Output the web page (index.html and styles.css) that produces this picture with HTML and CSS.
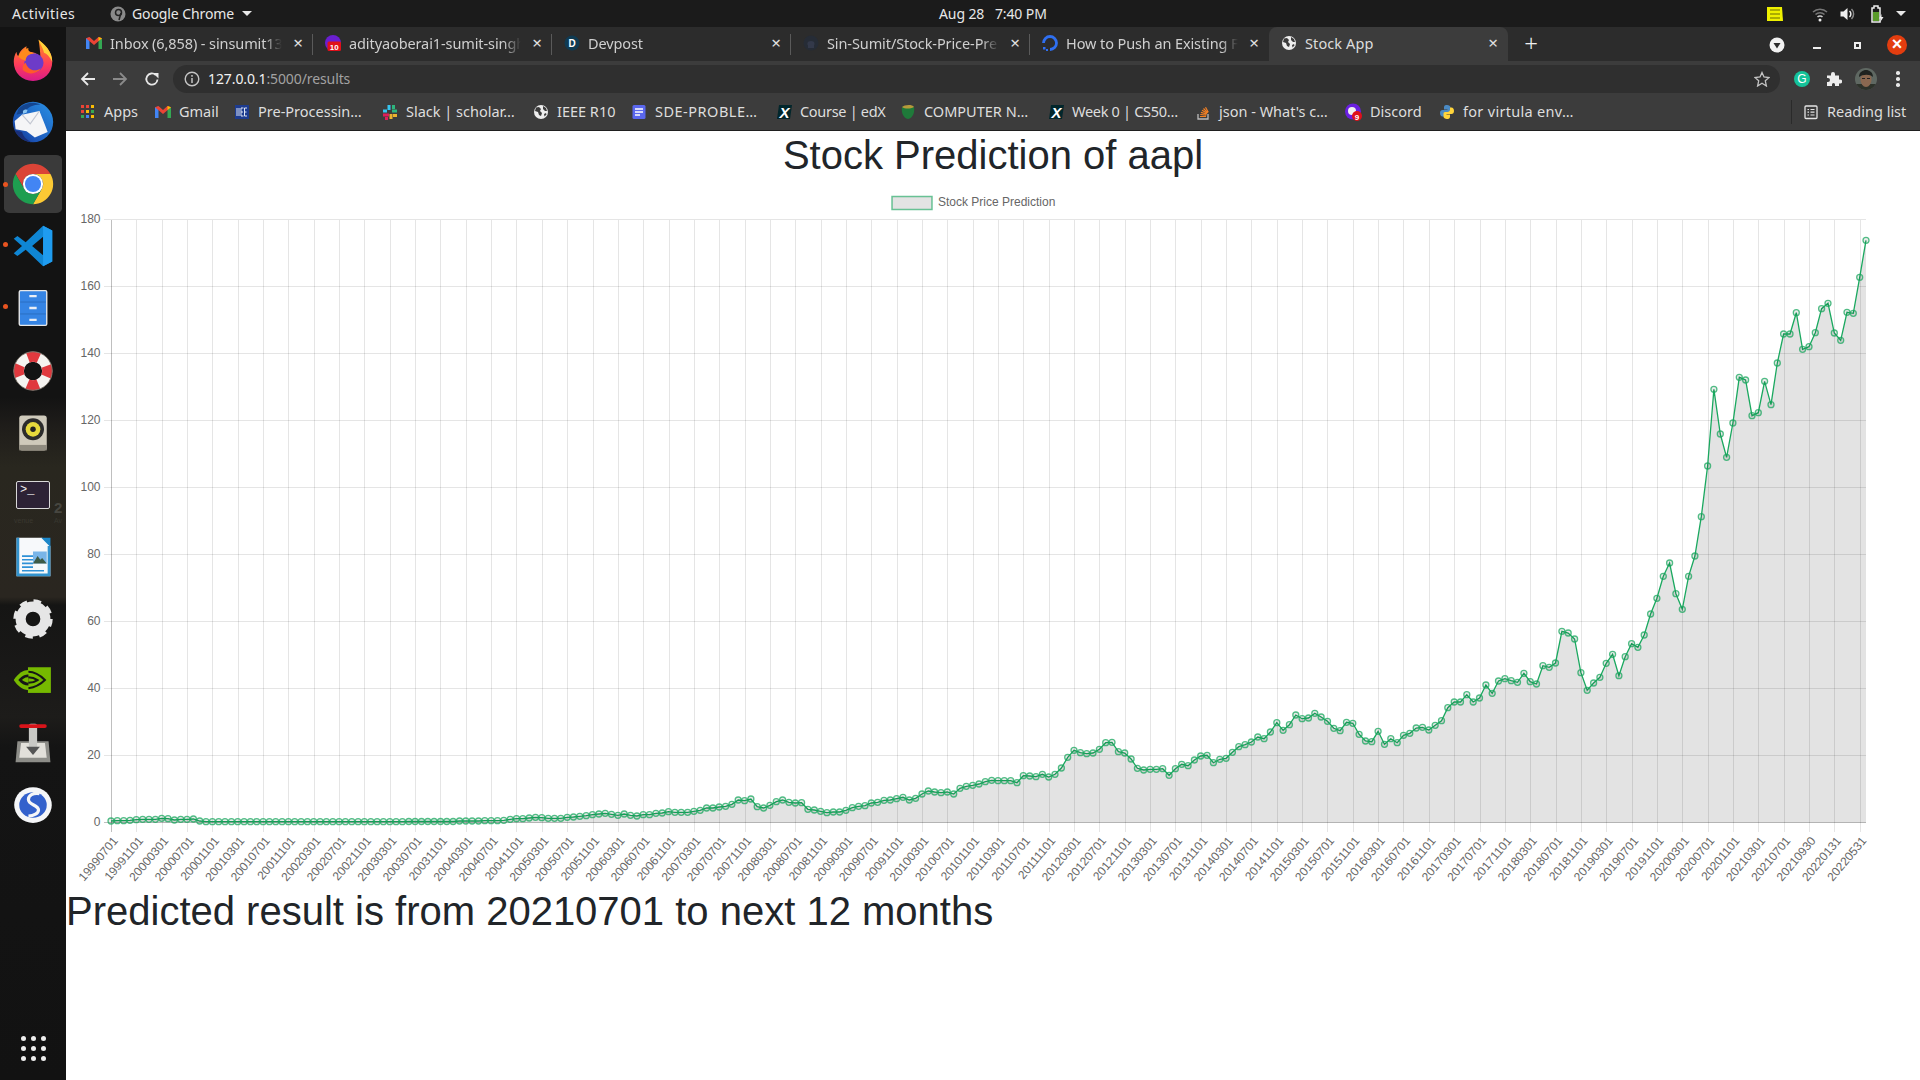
FILE: index.html
```html
<!DOCTYPE html>
<html lang="en">
<head>
<meta charset="utf-8">
<title>Stock App</title>
<link rel="stylesheet" href="styles.css">
</head>
<body>
<svg class="defs" width="0" height="0" aria-hidden="true">
  <symbol id="i-gmail" viewBox="0 0 16 16"><path d="M0 3.200 3.500 2.500V14H0z" fill="#4285f4"/><path d="M16 3.200 12.500 2.500V14H16z" fill="#34a853"/><path d="M0 3.200 3.500 2 8 6l4.500-4 3.500 1.200L8 10z" fill="#ea4335"/><path d="M12.500 2 16 3.200 12.500 6z" fill="#fbbc04"/></symbol>
  <symbol id="i-globe" viewBox="0 0 16 16"><circle cx="8" cy="8" r="7" fill="#eee"/><path d="M3 3.500 6 3l2 2-1 2 2 2-1 3-2-1-1-3-3-1zM10 2l3 2 1 3-2 0-2-2zM11 10l2-1 .5 1.500-2 2z" fill="#3c3c3c"/></symbol>
</svg>

<header class="panel">
  <span class="activities">Activities</span>
  <span class="app-name">
    <svg class="ico16" viewBox="0 0 16 16"><circle cx="8" cy="8" r="7.500" fill="#8a8a8a"/><circle cx="8.500" cy="6.500" r="3" fill="none" stroke="#222" stroke-width="1.500"/><path d="M11 7 9 14" stroke="#222" stroke-width="1.500"/></svg>
    Google Chrome
    <i class="caret"></i>
  </span>
  <span class="clock">Aug 28&nbsp;&nbsp; 7:40 PM</span>
  <span class="tray">
    <svg class="tray-note" viewBox="0 0 16 14"><path d="M0 0h15l1 14H0z" fill="#eef000"/><path d="M3 3h10M3 7h10M3 11h10" stroke="#6a6a00" stroke-width="1.200"/></svg>
    <svg class="tray-wifi" viewBox="0 0 16 16"><path d="M1 6a10 10 0 0 1 14 0M3.500 8.500a6.500 6.500 0 0 1 9 0" fill="none" stroke="#777" stroke-width="1.500"/><path d="M5.500 11a3.500 3.500 0 0 1 5 0" fill="none" stroke="#ccc" stroke-width="1.500"/><circle cx="8" cy="14" r="1.500" fill="#eee"/></svg>
    <svg class="tray-vol" viewBox="0 0 16 16"><path d="M1 5.500h3L8 2v12l-4-3.500H1z" fill="#eee"/><path d="M10 5a4 4 0 0 1 0 6" fill="none" stroke="#eee" stroke-width="1.500"/><path d="M12 3a7 7 0 0 1 0 10" fill="none" stroke="#888" stroke-width="1.500"/></svg>
    <svg class="tray-bat" viewBox="0 0 14 18"><path d="M4 1h4v2h2v14H2V3h2z" fill="none" stroke="#eee" stroke-width="1.500"/><rect x="3" y="7" width="6" height="9" fill="#5a9a2a"/><path d="M11.500 9 9 13.500h2l-1 4 3.500-5.500h-2z" fill="#eee"/></svg>
    <i class="caret"></i>
  </span>
</header>

<div class="desktop">
  <nav class="dock">
    <span class="wall-digit">2</span><span class="wall-av">Av</span><span class="wall-venue">venue</span>
    <div class="dock-item">
      <svg class="dock-ico" viewBox="0 0 48 48">
        <defs><linearGradient id="ff" x1="0" y1="0" x2="0" y2="1"><stop offset="0" stop-color="#ff9a18"/><stop offset=".6" stop-color="#ff3d5a"/><stop offset="1" stop-color="#d81b8a"/></linearGradient></defs>
        <path d="M30 2c6 5 15 12 15 24 0 12-9 21-21 21S3 38 3 26c0-4 1-8 3-11 0 2 1 4 2 5 1-5 5-9 9-11-1 3 0 5 2 6 5 0 10 2 13 6 0-6-1-13-2-20z" fill="url(#ff)"/>
        <path d="M30 2c6 5 15 12 15 24-3-6-6-9-9-10-1-5-4-9-6-14z" fill="#ffd13a"/>
        <circle cx="25" cy="27" r="10.500" fill="#6d3bc8"/>
        <path d="M8 20c2-5 6-8 11-9-1 4 3 5 7 6-8 0-10 4-10 8-3-1-6-2-8-5z" fill="#ff8a1a"/>
        <path d="M16 27c2 7 9 11 17 6-4 6-14 8-20 2-1-3 0-6 3-8z" fill="#ff5a2a"/>
      </svg>
    </div>
    <div class="dock-item">
      <svg class="dock-ico" viewBox="0 0 48 48">
        <defs><linearGradient id="tb" x1="1" y1="0" x2="0" y2="1"><stop offset="0" stop-color="#2a93e6"/><stop offset=".7" stop-color="#1b55b8"/><stop offset="1" stop-color="#16307e"/></linearGradient></defs>
        <circle cx="24" cy="24" r="22" fill="url(#tb)"/>
        <path d="M8 10c6-7 16-9 24-5-8 0-14 3-18 9l-8 2z" fill="#14458f"/>
        <path d="M13 12c2-2 4-2 5-1l-1 3-4 1z" fill="#8cc6f2"/>
        <path d="M4 23 12 16l19-4 6 15 3 8-14 6-9-7-12-2z" fill="#f5f5f7"/>
        <path d="M12 16 21 26 31 12" fill="none" stroke="#c3c7d2" stroke-width="1.300"/>
        <path d="M4 33c3 7 9 12 18 13-6-3-9-7-10-11z" fill="#1a2f78"/>
      </svg>
    </div>
    <div class="dock-item is-active">
      <svg class="dock-ico" viewBox="0 0 48 48">
        <path d="M4.950 13A22 22 0 0 1 43.050 13H24A11 11 0 0 0 14.470 29.500Z" fill="#db4437"/>
        <path d="M43.050 13A22 22 0 0 1 24 46L33.530 29.500A11 11 0 0 0 24 13Z" fill="#fcc934"/>
        <path d="M24 46A22 22 0 0 1 4.950 13L14.470 29.500A11 11 0 0 0 33.530 29.500Z" fill="#1e9e50"/>
        <circle cx="24" cy="24" r="11" fill="#fff"/><circle cx="24" cy="24" r="8.800" fill="#4285f4"/>
      </svg>
    </div>
    <div class="dock-item has-dot">
      <svg class="dock-ico" viewBox="0 0 48 48"><path fill-rule="evenodd" d="M35 2 45 7v34l-10 5L16 28 7 35l-4-3 9-8-9-8 4-3 9 7ZM35 14 23 24l12 10Z" fill="#0f86d4"/><path d="M35 2 45 7v34l-10 5Z" fill="#1f9cf0"/></svg>
    </div>
    <div class="dock-item has-dot">
      <svg class="dock-ico" viewBox="0 0 48 48"><rect x="9" y="5" width="30" height="38" rx="1.500" fill="#3584e4" stroke="#e8e8e8" stroke-width="1.500"/><path d="M10 17.500h28M10 30.500h28" stroke="#2a6cc0" stroke-width="1"/><path d="M20 11h8M20 24h8M20 37h8" stroke="#e8edf5" stroke-width="2.500"/></svg>
    </div>
    <div class="dock-item">
      <svg class="dock-ico" viewBox="0 0 48 48"><circle cx="24" cy="24" r="15.500" fill="none" stroke="#f5f3f0" stroke-width="11"/><circle cx="24" cy="24" r="15.500" fill="none" stroke="#e0393e" stroke-width="11" stroke-dasharray="12.170 12.170" stroke-dashoffset="6.080"/><circle cx="24" cy="24" r="21" fill="none" stroke="#7a7268" stroke-width="1"/></svg>
    </div>
    <div class="dock-item">
      <svg class="dock-ico" viewBox="0 0 48 48"><rect x="9" y="5" width="30" height="38" rx="3" fill="#cfcabb"/><rect x="9" y="37" width="30" height="6" fill="#8f8b7f"/><circle cx="24" cy="20" r="12" fill="#2c2c2c"/><circle cx="24" cy="20" r="8" fill="#e6d93c"/><circle cx="24" cy="20" r="3" fill="#222"/></svg>
    </div>
    <div class="dock-item">
      <div class="term-ico">&gt;_</div>
    </div>
    <div class="dock-item">
      <svg class="dock-ico" viewBox="0 0 48 48"><path d="M6 3h28l9 9v33H6z" fill="#f7f9fb"/><path d="M33 3h10v10z" fill="#1c87c9"/><path d="M6 3h3v39h31V12h3v33H6z" fill="#1c87c9" opacity=".9"/><path d="M12 23h12M12 27h12M12 31h12M12 35h12M12 39h24" stroke="#2f91d6" stroke-width="1.800"/><rect x="24" y="18" width="15" height="13" fill="#79b5e8"/><path d="M24 31l5-8 3 4 2-2 5 6z" fill="#3d5a46"/></svg>
    </div>
    <div class="dock-item">
      <svg class="dock-ico" viewBox="0 0 48 48"><circle cx="24" cy="24" r="13.500" fill="none" stroke="#e6e6e6" stroke-width="11"/><circle cx="24" cy="24" r="19" fill="none" stroke="#e6e6e6" stroke-width="5" stroke-dasharray="8 6.920"/></svg>
    </div>
    <div class="dock-item">
      <svg class="dock-ico" viewBox="0 0 48 48"><rect x="18.500" y="9" width="25" height="28" fill="#76b900"/><path d="M3 23C8 15 14 12 19 12V34C12 34 7 29 3 23Z" fill="#76b900"/><path d="M8 23c4-5 8-6 11-6v12c-4 0-8-2-11-6Z" fill="#161616"/><path d="M12 23c3-3 5-3 7-3v6c-2 0-4-1-7-3Z" fill="#76b900"/><path d="M19 14c7 0 13 4 18 9-5 5-11 8-18 9M19 20c4 0 7 1 10 3-3 2-6 3-10 3" fill="none" stroke="#161616" stroke-width="2.200"/></svg>
    </div>
    <div class="dock-item">
      <svg class="dock-ico" viewBox="0 0 48 48"><path d="M7 22h34l2 23H5z" fill="#8d8d88"/><path d="M11 24h26l2 16H9z" fill="#e2e0da"/><rect x="19.500" y="3" width="9" height="28" rx="2" fill="#c9c9c5"/><path d="M16.500 28h15L24 37z" fill="#555"/><rect x="9" y="3.500" width="30" height="4" rx="2" fill="#d8141a"/></svg>
    </div>
    <div class="dock-item">
      <svg class="dock-ico" viewBox="0 0 48 48"><ellipse cx="24" cy="24" rx="20.500" ry="19.500" fill="#f5f6f8"/><ellipse cx="24" cy="24" rx="15" ry="14" fill="#3361cc"/><path d="M31 11.500c-7-1-12 2-12 6.500 0 6 11 6 11 11.500 0 3.500-5 6.500-11 6.500" fill="none" stroke="#f5f6f8" stroke-width="3.500"/></svg>
    </div>
    <div class="dock-apps"><i></i><i></i><i></i><i></i><i></i><i></i><i></i><i></i><i></i></div>
  </nav>

  <div class="browser">
    <div class="tabstrip">
      <div class="tab">
        <svg class="ico16"><use href="#i-gmail"/></svg>
        <span class="tab-title">Inbox (6,858) - sinsumit13</span>
        <span class="tab-close">×</span>
      </div>
      <div class="tab">
        <svg class="ico16" viewBox="0 0 16 16"><circle cx="8" cy="8" r="8" fill="#6a1fd0"/><rect x="2.500" y="6.500" width="13.500" height="9.500" rx="1.500" fill="#e0101a"/><text x="9.200" y="14.500" text-anchor="middle" class="badge-num">10</text></svg>
        <span class="tab-title">adityaoberai1-sumit-singh</span>
        <span class="tab-close">×</span>
      </div>
      <div class="tab">
        <svg class="ico16" viewBox="0 0 16 16"><circle cx="8" cy="8" r="7.500" fill="#0f3a52"/><text x="8" y="12" text-anchor="middle" class="dev-d">D</text></svg>
        <span class="tab-title">Devpost</span>
        <span class="tab-close">×</span>
      </div>
      <div class="tab">
        <svg class="ico16" viewBox="0 0 16 16"><circle cx="8" cy="8" r="7.500" fill="#262c36"/><path d="M5 13V10.500C4 9 4 6 8 6s4 3 3 4.500V13" fill="#33394a"/></svg>
        <span class="tab-title">Sin-Sumit/Stock-Price-Pre</span>
        <span class="tab-close">×</span>
      </div>
      <div class="tab">
        <svg class="ico16" viewBox="0 0 16 16"><path d="M8 14.500A6.500 6.500 0 1 0 1.500 8" fill="none" stroke="#2f6ff0" stroke-width="2.800"/><path d="M1 12h2.500v2.500H1zM4 14h2v2H4z" fill="#2f6ff0"/></svg>
        <span class="tab-title">How to Push an Existing F</span>
        <span class="tab-close">×</span>
      </div>
      <div class="tab is-current">
        <svg class="ico16"><use href="#i-globe"/></svg>
        <span class="tab-title">Stock App</span>
        <span class="tab-close">×</span>
      </div>
      <span class="new-tab">+</span>
      <div class="winctl">
        <span class="winslot"><svg class="ico16" viewBox="0 0 16 16"><circle cx="8" cy="8" r="7.500" fill="#f2f2f2"/><path d="M4.500 6h7L8 11.500z" fill="#2b2b2b"/></svg></span>
        <span class="winslot"><i class="win-min"></i></span>
        <span class="winslot"><i class="win-max"></i></span>
        <span class="winslot"><span class="win-close">×</span></span>
      </div>
    </div>

    <div class="toolbar">
      <span class="navslot"><svg class="ico16" viewBox="0 0 16 16"><path d="M15 8H2M8 2 2 8l6 6" fill="none" stroke="#e8e8e8" stroke-width="1.800"/></svg></span>
      <span class="navslot"><svg class="ico16" viewBox="0 0 16 16"><path d="M1 8h13M8 2l6 6-6 6" fill="none" stroke="#8a8a8a" stroke-width="1.800"/></svg></span>
      <span class="navslot"><svg class="ico16" viewBox="0 0 16 16"><path d="M13.500 8.500A5.600 5.600 0 1 1 11.800 4" fill="none" stroke="#e8e8e8" stroke-width="1.800"/><path d="M9 1l5.500 0v5.500z" fill="#e8e8e8" transform="translate(0 1)"/></svg></span>
      <div class="urlbar">
        <svg class="ico14" viewBox="0 0 16 16"><circle cx="8" cy="8" r="6.800" fill="none" stroke="#c4c4c4" stroke-width="1.400"/><path d="M8 7v5M8 4v1.800" stroke="#c4c4c4" stroke-width="1.500"/></svg>
        <span class="url"><b>127.0.0.1</b>:5000/results</span>
        <svg class="star" viewBox="0 0 16 16"><path d="M8 1.500 10 6l5 .5-3.700 3.300L12.400 15 8 12.300 3.600 15l1.100-5.200L1 6.500 6 6z" fill="none" stroke="#c4c4c4" stroke-width="1.300"/></svg>
      </div>
      <div class="extensions">
        <span class="navslot"><svg class="ico16 ext-g" viewBox="0 0 16 16"><circle cx="8" cy="8" r="8" fill="#15c39a"/><text x="8" y="12" text-anchor="middle" class="g-letter">G</text></svg></span>
        <span class="navslot"><svg class="ico16" viewBox="0 0 16 16"><path d="M1 4.500h4V3a2 2 0 0 1 4 0v1.500h4v4h1.200a2 2 0 0 1 0 4H13V15H9v-1.500a1.500 1.500 0 0 0-3 0V15H1v-4h1a2 2 0 0 0 0-4H1z" fill="#eee"/></svg></span>
        <span class="navslot"><svg class="avatar" viewBox="0 0 22 22"><defs><clipPath id="av"><circle cx="11" cy="11" r="11"/></clipPath></defs><g clip-path="url(#av)"><rect width="22" height="22" fill="#5f6862"/><rect x="0" y="16" width="22" height="6" fill="#2d322a"/><ellipse cx="11" cy="11.500" rx="5.500" ry="7.500" fill="#8a6850"/><path d="M4 9c0-5 4-7 7-7s7 2 7 7c-3-3-10-3-14 0z" fill="#1f2320"/><path d="M7 10.500h3M12 10.500h3" stroke="#222" stroke-width="1"/></g></svg></span>
        <span class="navslot"><i class="kebab"></i></span>
      </div>
    </div>

    <div class="bookmarks">
      <a class="bm"><svg class="ico16" viewBox="0 0 16 16"><path d="M1 1h3v3H1z" fill="#ea4335"/><path d="M6 1h3v3H6z" fill="#ea4335"/><path d="M11 1h3v3h-3z" fill="#fbbc04"/><path d="M1 6h3v3H1z" fill="#ea4335"/><path d="M6 6h3v3H6z" fill="#fbbc04"/><path d="M11 6h3v3h-3z" fill="#34a853"/><path d="M1 11h3v3H1z" fill="#34a853"/><path d="M6 11h3v3H6z" fill="#4285f4"/><path d="M11 11h3v3h-3z" fill="#fbbc04"/></svg><span>Apps</span></a>
      <a class="bm"><svg class="ico16"><use href="#i-gmail"/></svg><span>Gmail</span></a>
      <a class="bm"><svg class="ico16" viewBox="0 0 16 16"><rect x="1" y="1" width="14" height="14" fill="#1d3b8f"/><path d="M3 4v8M5 4v8M7 4v8h2.500M7 8h2M7 4h2.500M10.500 4v8H13M10.500 8H12.500M10.500 4H13" fill="none" stroke="#dfe6f5" stroke-width="1"/></svg><span>Pre-Processin…</span></a>
      <a class="bm"><svg class="ico16" viewBox="0 0 16 16"><path d="M5.500 1h3v5h-3zM1 5.500h4v3H1z" fill="#36c5f0"/><path d="M10 5.500h5v3h-5zM10 1h3v4h-3z" fill="#2eb67d"/><path d="M7.500 10h3v5h-3zM11 10h4v3h-4z" fill="#ecb22e"/><path d="M1 9.500h6v3H1zM3 13h3v3H3z" fill="#e01e5a"/></svg><span>Slack | scholar…</span></a>
      <a class="bm"><svg class="ico16"><use href="#i-globe"/></svg><span>IEEE R10</span></a>
      <a class="bm"><svg class="ico16" viewBox="0 0 16 16"><rect x="1.500" y="1" width="13" height="14" rx="1.500" fill="#5a67ee"/><path d="M4 5h8M4 8h8M4 11h5" stroke="#fff" stroke-width="1.400"/></svg><span class="wide">SDE-PROBLE…</span></a>
      <a class="bm"><svg class="ico16" viewBox="0 0 16 16"><path d="M3 1h13l-2 14H1z" fill="#02262b"/><text x="8.500" y="13.500" text-anchor="middle" class="edx-x">X</text></svg><span class="tight">Course | edX</span></a>
      <a class="bm"><svg class="ico16" viewBox="0 0 16 16"><path d="M2 3c3 1 8 1 12 0 1 5-1 11-6 12C3 14 1 8 2 3z" fill="#1f7a3a"/><path d="M2 3c2-2 10-3 12 0-4 2-9 2-12 0z" fill="#b59a3a"/></svg><span>COMPUTER N…</span></a>
      <a class="bm"><svg class="ico16" viewBox="0 0 16 16"><path d="M3 1h13l-2 14H1z" fill="#02262b"/><text x="8.500" y="13.500" text-anchor="middle" class="edx-x">X</text></svg><span class="tight">Week 0 | CS50…</span></a>
      <a class="bm"><svg class="ico16" viewBox="0 0 16 16"><path d="M3 10v5h10v-5" fill="none" stroke="#bcbbbb" stroke-width="1.300"/><path d="M5 12.500h6M5.300 10.500l6 .6M5.900 8.400l5.800 1.600M7 6.300l5.200 3M8.500 4.500l4.300 4.300M10.500 3.200l2.800 5" stroke="#f48024" stroke-width="1.200"/></svg><span>json - What's c…</span></a>
      <a class="bm"><svg class="ico16 ico-discord" viewBox="0 0 18 18"><circle cx="9" cy="8.500" r="8" fill="#6a1fe0"/><circle cx="8" cy="8" r="4" fill="#f0f0f0"/><circle cx="13" cy="13" r="5" fill="#e0101a"/><text x="13" y="16.500" text-anchor="middle" class="badge-num">9</text></svg><span>Discord</span></a>
      <a class="bm"><svg class="ico16" viewBox="0 0 16 16"><path d="M8 1C5 1 5 2.500 5 4v1.500h3.500V6H3.500C2 6 1 7 1 9s1 3.500 2.500 3.500H5V10.500C5 9 6 8 7.500 8H10c1 0 1.500-.8 1.500-1.800V3.500C11.500 2 10 1 8 1z" fill="#4a8ac4"/><path d="M8 15c3 0 3-1.500 3-3v-1.500H7.500V10h5c1.500 0 2.500-1 2.500-3s-1-3.500-2.500-3.500H11V5.500C11 7 10 8 8.500 8H6c-1 0-1.500.8-1.500 1.800v2.700C4.500 14 6 15 8 15z" fill="#ffd43b"/></svg><span class="loose">for virtula env…</span></a>
      <div class="reading"><svg class="ico16" viewBox="0 0 16 16"><rect x="2" y="2" width="12" height="12.500" rx="1" fill="none" stroke="#e4e4e4" stroke-width="1.300"/><path d="M4.500 5.500h1.500M7.500 5.500h4M4.500 8.200h1.500M7.500 8.200h4M4.500 11h1.500M7.500 11h4" stroke="#e4e4e4" stroke-width="1.200"/></svg><span>Reading list</span></div>
    </div>

    <main class="page">
      <h1 class="title">Stock Prediction of aapl</h1>
      <div class="chart-wrap"><svg id="chart" class="chart" viewBox="66 187 1854 699" xmlns="http://www.w3.org/2000/svg"></svg></div>
      <h1 class="predicted">Predicted result is from 20210701 to next 12 months</h1>
    </main>
  </div>
</div>
<script src="chart.js"></script>
</body>
</html>
```

FILE: styles.css
```css
* { box-sizing: border-box; }
html, body { margin: 0; height: 1080px; overflow: hidden; }
body { font-family: "Noto Sans", "Open Sans", sans-serif; font-size: 14.500px; background: #fff; }
.defs { position: absolute; }
.ico16 { width: 16px; height: 16px; flex: none; display: block; }
.ico14 { width: 16px; height: 16px; flex: none; display: block; }

/* top panel */
.panel { height: 27px; background: #1b1b1b; color: #e8e8e8; display: flex; align-items: center; position: relative; font-size: 14px; }
.activities { margin-left: 12px; width: 86px; letter-spacing: .5px; }
.app-name { display: flex; align-items: center; gap: 6px; margin-left: 12px; letter-spacing: -.1px; }
.caret { display: inline-block; width: 0; height: 0; border-left: 5px solid transparent; border-right: 5px solid transparent; border-top: 5px solid #e8e8e8; margin-left: 2px; }
.clock { position: absolute; left: 939px; top: 3px; line-height: 21px; letter-spacing: -.1px; }
.tray { margin-left: auto; display: flex; align-items: center; padding-right: 14px; }
.tray-note { width: 16px; height: 14px; margin-right: 29px; }
.tray-wifi { width: 16px; height: 16px; margin-right: 11px; }
.tray-vol { width: 17px; height: 16px; margin-right: 14px; }
.tray-bat { width: 14px; height: 18px; margin-right: 10px; }

.desktop { display: flex; height: 1053px; }

/* dock */
.dock { width: 66px; flex: none; background: linear-gradient(#131313 0, #131313 370px, #1f1d1a 400px, #29271f 440px, #2a2620 570px, #151514 578px, #1a1918 650px, #1d1c1a 690px, #141414 720px, #121212 100%); padding-top: 2px; display: flex; flex-direction: column; align-items: center; position: relative; overflow: hidden; }
.dock-item { height: 62.100px; width: 58px; flex: none; display: flex; align-items: center; justify-content: center; position: relative; }
.dock-ico { width: 44px; height: 44px; display: block; position: relative; }
.is-active { background: #3a3a3a; background-clip: padding-box; border: solid transparent; border-width: 2px 0; border-radius: 6px; }
.is-active::before, .has-dot::before { content: ""; position: absolute; left: -1px; top: 27px; width: 5px; height: 5px; border-radius: 50%; background: #e95420; }
.term-ico { width: 34px; height: 28px; background: #2c2235; border: 1.500px solid #d8d8d8; border-radius: 2px; color: #eee; font: 12px/14px "Liberation Mono", monospace; padding: 1px 3px; }
.dock-apps { position: absolute; left: 21px; top: 1009px; display: grid; grid-template-columns: repeat(3, 5px); gap: 5px; }
.dock-apps i { width: 5px; height: 5px; background: #eee; border-radius: 50%; }
.wall-digit { position: absolute; left: 54px; top: 472px; color: #474640; font: bold 15px "Liberation Sans", sans-serif; }
.wall-av { position: absolute; left: 54px; top: 490px; color: #383730; font: 7px "Liberation Sans", sans-serif; }
.wall-venue { position: absolute; left: 14px; top: 490px; color: #3a3830; font: 7px "Liberation Sans", sans-serif; }

/* browser chrome */
.browser { flex: 1; min-width: 0; display: flex; flex-direction: column; }
.tabstrip { height: 34px; background: #2c2c2c; display: flex; padding-left: 8px; color: #cfcfcf; }
.tab { width: 239px; flex: none; display: flex; align-items: center; padding: 0 7px 2px 12px; gap: 8px; position: relative; }
.tab::after { content: ""; position: absolute; right: 0; top: 7px; width: 1px; height: 21px; background: #5a5a5a; }
.tab:nth-child(5)::after, .is-current::after { display: none; }
.tab-title { flex: 1; min-width: 0; white-space: nowrap; overflow: hidden; letter-spacing: -.1px; -webkit-mask-image: linear-gradient(90deg, #000 90%, transparent 100%); mask-image: linear-gradient(90deg, #000 90%, transparent 100%); }
.tab-close { width: 16px; text-align: center; font-size: 17px; line-height: 16px; color: #e0e0e0; }
.is-current { background: #3c3c3c; border-radius: 8px 8px 0 0; color: #dcdcdc; }
.is-current .tab-title { letter-spacing: .1px; -webkit-mask-image: none; mask-image: none; }
.new-tab { width: 24px; margin-left: 11px; text-align: center; font-size: 24px; line-height: 32px; color: #f0f0f0; font-weight: 300; }
.winctl { margin-left: auto; display: flex; padding-right: 3px; }
.winslot { width: 40px; display: flex; align-items: center; justify-content: center; position: relative; top: 1px; }
.win-min { width: 8px; height: 2px; background: #eee; margin-top: 6px; }
.win-max { width: 7px; height: 7px; border: 2px solid #eee; }
.win-close { width: 20px; height: 20px; border-radius: 50%; background: #e33d0f; color: #fff; font: bold 18px/19px "Liberation Sans", sans-serif; text-align: center; }

.toolbar { height: 32px; background: #3c3c3c; display: flex; align-items: flex-end; padding-left: 6px; padding-right: 6px; }
.navslot { width: 32px; height: 28px; display: flex; align-items: center; justify-content: center; flex: none; }
.urlbar { flex: 1; height: 28px; margin-left: 5px; margin-right: 6px; background: #2f2f2f; border-radius: 14px; display: flex; align-items: center; padding: 0 10px 0 11px; color: #a2a2a2; }
.url { margin: -2px 0 0 8px; flex: 1; font-size: 14px; letter-spacing: -.1px; }
.url b { font-weight: 400; color: #f2f2f2; }
.star { width: 16px; height: 16px; }
.extensions { display: flex; flex: none; }
.avatar { width: 22px; height: 22px; }
.kebab { width: 3.500px; height: 3.500px; border-radius: 50%; background: #e8e8e8; box-shadow: 0 -6px 0 #e8e8e8, 0 6px 0 #e8e8e8; }

.bookmarks { height: 38px; background: #3c3c3c; border-bottom: 1px solid #1f1f1f; display: grid; grid-template-columns: 75px 79px 148px 151px 98px 145px 124px 148px 147px 150px 94px 352px 1fr; padding-left: 14px; align-items: center; color: #dedede; }
.bm { display: flex; align-items: center; gap: 8px; white-space: nowrap; }
.bm span, .reading span { margin-top: -2px; }
.bm .wide { letter-spacing: .5px; }
.bm .tight { letter-spacing: -.3px; }
.bm .loose { letter-spacing: .3px; }
.ico-discord { width: 18px; height: 18px; margin-left: -1px; }
.reading { display: flex; align-items: center; gap: 8px; border-left: 1px solid #2a2a2a; padding-left: 11px; height: 24px; white-space: nowrap; }
.edx-x { font: italic bold 15px "Liberation Sans", sans-serif; fill: #fff; }
.badge-num { font: bold 8px "Liberation Sans", sans-serif; fill: #fff; }
.dev-d { font: bold 10px "Liberation Sans", sans-serif; fill: #fff; }
.g-letter { font: 12px "Liberation Sans", sans-serif; fill: #fff; }

/* page */
.page { flex: 1; background: #fff; font-family: "Liberation Sans", Arial, sans-serif; color: #212529; min-height: 0; }
.title, .predicted { margin: 0; font-size: 40px; font-weight: 400; line-height: 48px; }
.title { text-align: center; margin-bottom: 8px; }
.chart-wrap { height: 700px; }
.chart { display: block; width: 1854px; height: 699px; font-family: "Liberation Sans", Arial, sans-serif; }
.grid-line { stroke: rgba(0,0,0,.1); stroke-width: 1; shape-rendering: crispEdges; }
.zero-line { stroke: rgba(0,0,0,.25); stroke-width: 1; shape-rendering: crispEdges; }
.area { fill: rgba(0,0,0,.11); stroke: none; }
.line { fill: none; stroke: #1aa85f; stroke-width: 1.300; }
.pt { fill: rgba(0,0,0,.08); stroke: rgba(26,168,95,.75); stroke-width: 1.300; }
.tick { fill: #666; font-size: 12px; }
.legend-box { fill: #e3e3e3; stroke: rgba(31,168,99,.65); stroke-width: 1.500; }
```

FILE: chart.js
```js
(function () {
  var NS = 'http://www.w3.org/2000/svg';
  var svg = document.getElementById('chart');

  var PLOT = { left: 111, right: 1866, top: 219.5, bottom: 822.5, perValue: 3.35 };
  var STEP = (PLOT.right - PLOT.left) / 277;

  // Sampled closing prices, kept as screen rows of the plot in runs: [origin, start index, rows × 3]
  var flat = [];
  for (var k = 0; k < 39; k++) flat.push(k > 30 ? 94.500 : 95);
  var runs = [
    [790, 0, [93,92,92,91,89,88,88,88,85,86,90,88,88,87,93,95].concat(flat)],
    [770, 55, [153,153,153,153,152,152,152,151,148,146,146,144,142,143,145,145,145,142,141,139,137,134,132,130,133,136,132,136,138,134,134,130,129,125,127,127,127,124,121,114,114,111,109,103,90,92,87,110,114,106,95,90,97,99]],
    [660, 109, [428,448,450,454,458,456,456,451,443,439,437,429,427,421,420,416,412,420,415,402,393,396,398,396,402,385,379,376,372,365,361,362,362,362,368,347,348,350,343,351,343,324,292,271,278,281,279,268,248,247,275,279,297,325,330,328,328,326,346,326,313,317,300,288,286,308,298,295,277,260,254,246,231,236,216,188,211,194,165,176,174,160,171,184,205,212,187,190,223,243,245,214,253,236,248]],
    [500, 204, [706,700,684,682,690,676,662,623,606,606,584,606,594,555,580,543,536,542,547,520,545,552,497,502,489,394,399,417,518,571,549,532,490,463,527,470,431,442,405,342,295,229,189,281,328,229,168,50]],
    [200, 252, [798,568,702,772,669,532,540,647,638,544,614,489,402,402,338,448,440,398,326,310,399,421,337,340,232,121]]
  ];
  var rows = [];
  runs.forEach(function (r) {
    r[2].forEach(function (z, n) { rows[r[1] + n] = r[0] + z / 3; });
  });

  function el(name, attrs, text) {
    var e = document.createElementNS(NS, name);
    for (var a in attrs) e.setAttribute(a, attrs[a]);
    if (text !== undefined) e.textContent = text;
    svg.appendChild(e);
    return e;
  }
  function xAt(i) { return PLOT.left + STEP * i; }

  // tick labels
  function labelAt(i) {
    if (i === 268) return '20210930';
    if (i === 272) return '20220131';
    if (i === 276) return '20220531';
    var months = 6 + i; // 1999-07 is month index 6 of 1999
    var y = 1999 + Math.floor(months / 12);
    var m = months % 12 + 1;
    return '' + y + (m < 10 ? '0' : '') + m + '01';
  }

  // horizontal grid + y labels
  for (var v = 0; v <= 180; v += 20) {
    var gy = Math.floor(PLOT.bottom - v * PLOT.perValue) + 0.5;
    el('line', { x1: 104, x2: PLOT.right, y1: gy, y2: gy, 'class': v === 0 ? 'zero-line' : 'grid-line' });
    el('text', { x: 100.500, y: gy + 3.500, 'text-anchor': 'end', 'class': 'tick' }, String(v));
  }

  // vertical grid + x labels
  for (var i = 0; i <= 276; i += 4) {
    var gx = Math.round(xAt(i)) + 0.5;
    el('line', { x1: gx, x2: gx, y1: PLOT.top, y2: 832, 'class': i === 0 ? 'zero-line' : 'grid-line' });
    var lx = xAt(i) + 5, ly = 839;
    el('text', { x: 0, y: 0, 'text-anchor': 'end', 'dominant-baseline': 'middle', 'class': 'tick', transform: 'translate(' + lx + ' ' + ly + ') rotate(-50)' }, labelAt(i));
  }

  // series
  var pts = rows.map(function (y, n) { return xAt(n).toFixed(1) + ',' + y.toFixed(1); });
  el('polygon', { points: PLOT.left + ',' + PLOT.bottom + ' ' + pts.join(' ') + ' ' + PLOT.right + ',' + PLOT.bottom, 'class': 'area' });
  el('polyline', { points: pts.join(' '), 'class': 'line' });
  rows.forEach(function (y, n) { el('circle', { cx: xAt(n).toFixed(1), cy: y.toFixed(1), r: 3, 'class': 'pt' }); });

  // legend
  el('rect', { x: 892, y: 196.500, width: 40, height: 13, 'class': 'legend-box' });
  el('text', { x: 938, y: 206, 'class': 'tick', 'font-size': 12 }, 'Stock Price Prediction');
})();
```
